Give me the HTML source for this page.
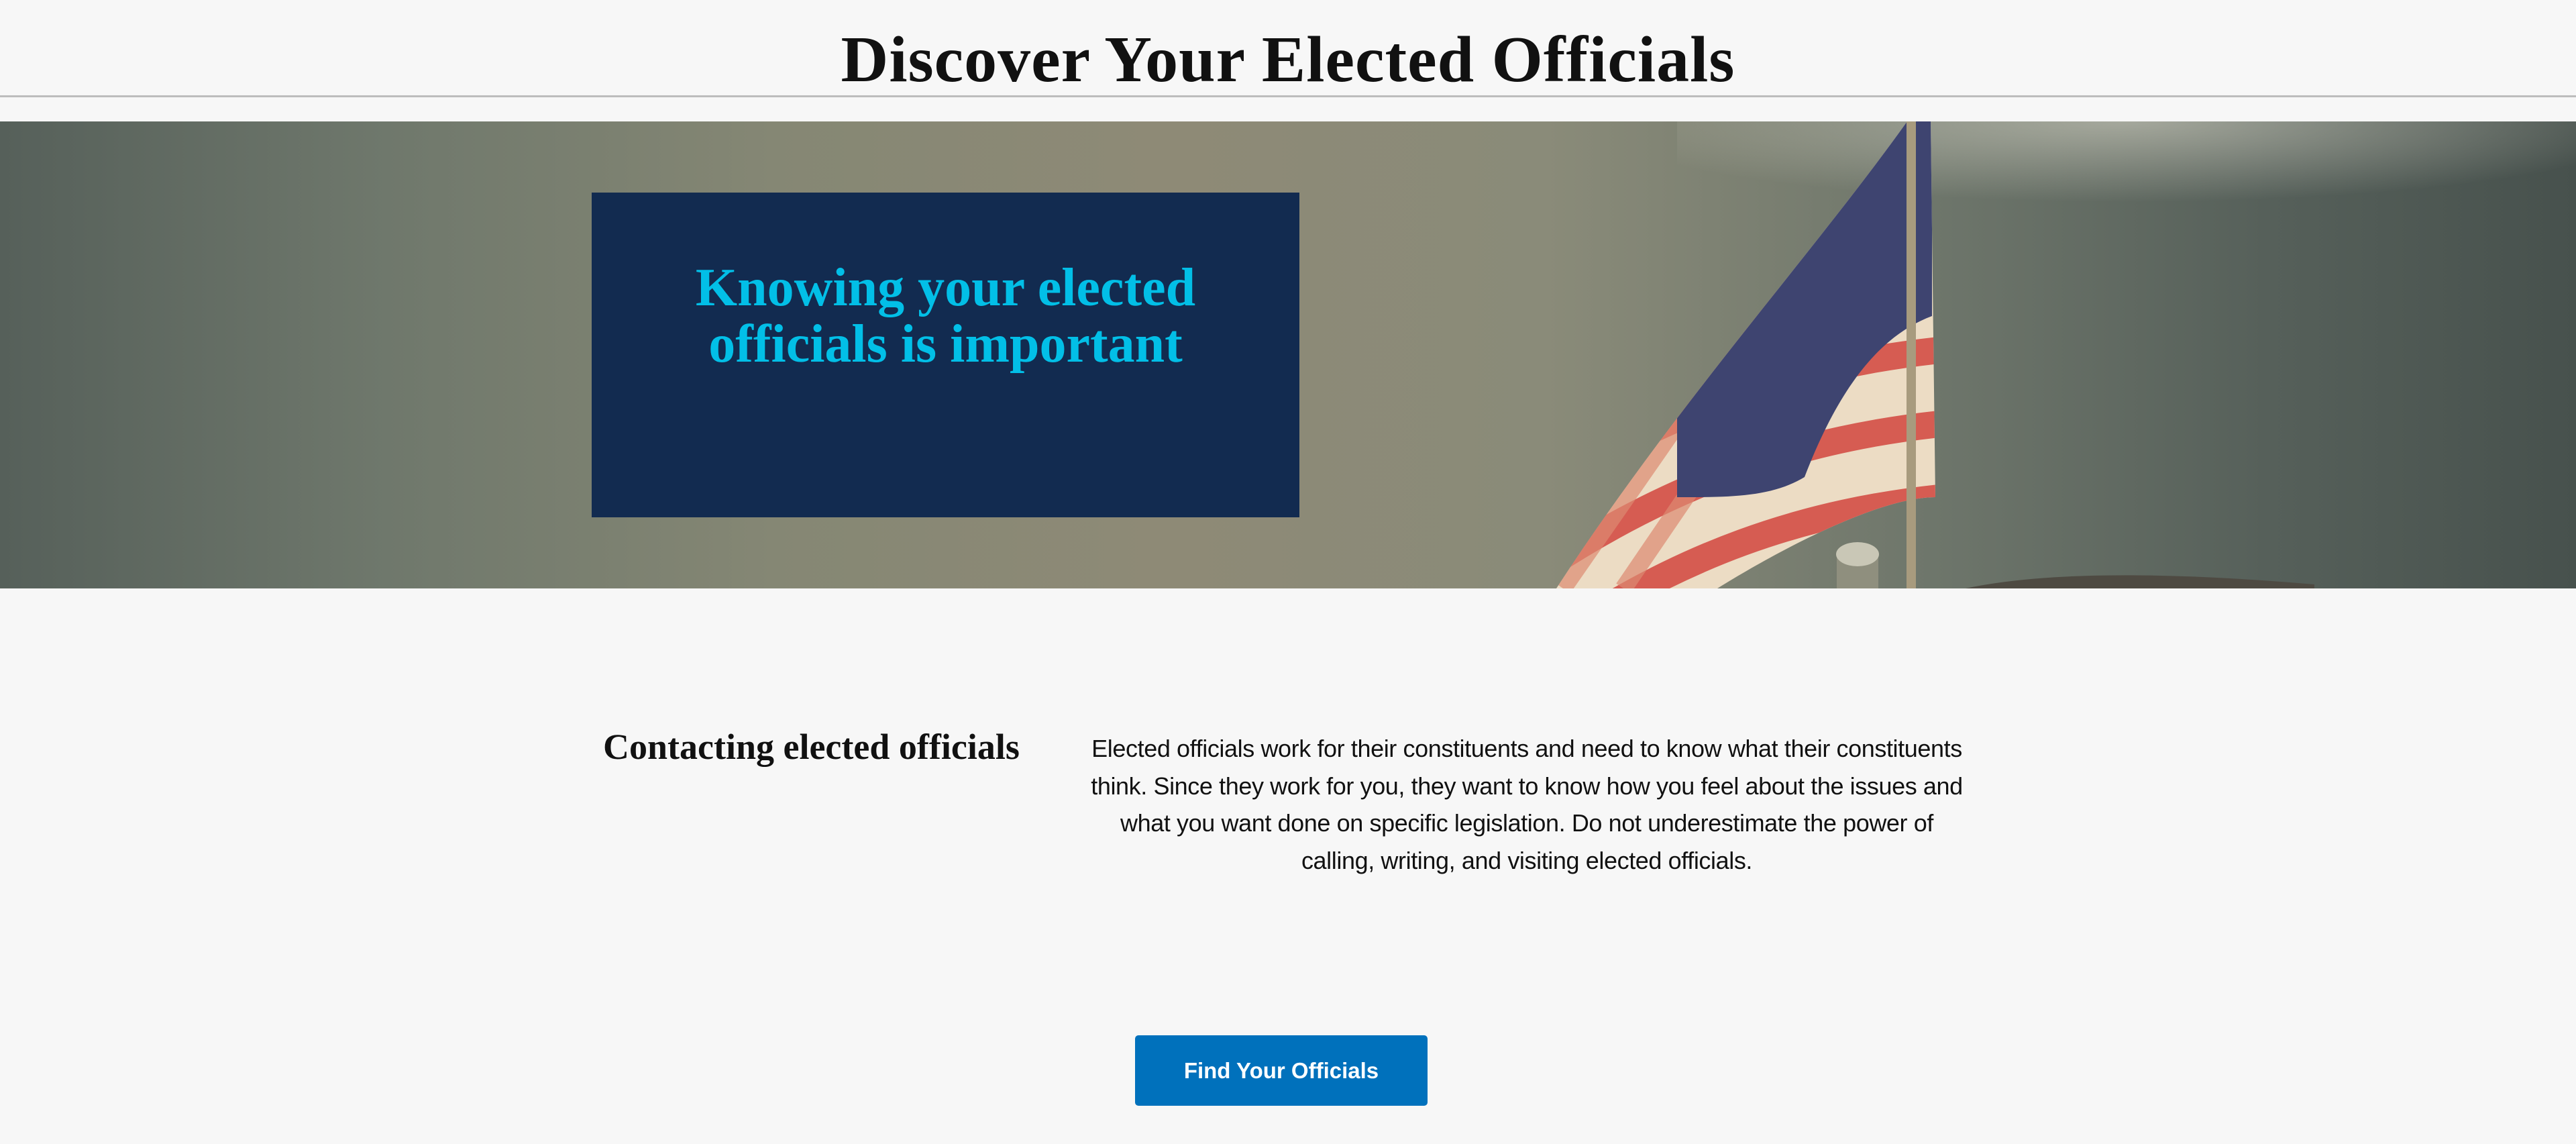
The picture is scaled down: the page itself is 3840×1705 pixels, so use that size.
<!DOCTYPE html>
<html><head><meta charset="utf-8"><style>
html,body{margin:0;padding:0;background:#f7f7f7;width:3840px;height:1705px;overflow:hidden;position:relative}
.t{position:absolute;left:0;width:3840px;top:24px;text-align:center;font-family:"Liberation Serif",serif;font-weight:bold;font-size:98px;line-height:130px;color:#111;letter-spacing:1px}
.line{position:absolute;left:0;top:142px;width:3840px;height:3px;background:#bdbdbd}
.hero{position:absolute;left:0;top:181px;width:3840px;height:696px;overflow:hidden;
background:linear-gradient(90deg,#56605a 0%,#6f786c 15%,#858774 30%,#8e8a76 45%,#8a8b79 60%,#6e766b 75%,#56605a 88%,#47514d 100%)}
.box{position:absolute;left:882px;top:287px;width:1055px;height:484px;background:#122b50}
.box h2{margin:0;position:absolute;top:100px;left:0;width:100%;text-align:center;font-family:"Liberation Serif",serif;font-weight:bold;font-size:80px;line-height:84px;color:#02bfe7}
.h3{position:absolute;left:899px;top:1078px;font-family:"Liberation Serif",serif;font-weight:bold;font-size:54px;line-height:70px;color:#111}
.p{position:absolute;left:1476px;top:1088px;width:1600px;text-align:center;font-family:"Liberation Sans",sans-serif;font-size:36px;line-height:55.5px;color:#111;letter-spacing:-0.4px}
.btn{position:absolute;left:1692px;top:1543px;width:436px;height:105px;background:#0071bc;border-radius:5px;color:#fff;font-family:"Liberation Sans",sans-serif;font-weight:bold;font-size:33px;line-height:105px;text-align:center}
</style></head><body>
<div class="t">Discover Your Elected Officials</div>
<div class="line"></div>
<div class="hero">
<svg width="3840" height="696" viewBox="0 0 3840 696" style="position:absolute;left:0;top:0">
<defs>
<radialGradient id="sky" cx="0.5" cy="0" r="0.6"><stop offset="0" stop-color="#dedccd" stop-opacity=".55"/><stop offset="1" stop-color="#dedccd" stop-opacity="0"/></radialGradient>
<clipPath id="fc"><path d="M2843,0 L2878,0 L2885,560 C2800,560 2650,640 2560,696 L2320,696 C2500,420 2700,200 2843,0Z"/></clipPath>
</defs>
<rect x="2500" y="0" width="1340" height="200" fill="url(#sky)"/>
<g clip-path="url(#fc)">
<rect x="2300" y="0" width="600" height="696" fill="#ecdcc4"/>
<g stroke="#d65c52" stroke-width="40" fill="none">
<path d="M2280,560 C2500,420 2700,360 2900,340"/>
<path d="M2280,680 C2500,530 2700,470 2900,450"/>
<path d="M2280,800 C2500,640 2700,580 2900,560"/>
</g>
<g stroke="#dd8a72" stroke-width="26" fill="none" opacity=".7">
<path d="M2330,696 L2640,250"/><path d="M2420,696 L2690,300"/>
</g>
<path d="M2843,0 L2880,0 L2880,290 C2800,320 2740,400 2690,530 C2640,560 2580,560 2500,560 L2500,0Z" fill="#3e4470"/>
</g>
<rect x="2842" y="0" width="14" height="696" fill="#a89b7e"/>
<rect x="2738" y="640" width="62" height="56" fill="#8f8f7e"/>
<ellipse cx="2769" cy="645" rx="32" ry="18" fill="#c9c7b6"/>
<path d="M2930,696 Q3100,660 3450,690 L3450,696Z" fill="#4e4a42"/>
</svg>
</div>
<div class="box"><h2>Knowing your elected<br>officials is important</h2></div>
<div class="h3">Contacting elected officials</div>
<div class="p">Elected officials work for their constituents and need to know what their constituents<br>think. Since they work for you, they want to know how you feel about the issues and<br>what you want done on specific legislation. Do not underestimate the power of<br>calling, writing, and visiting elected officials.</div>
<div class="btn">Find Your Officials</div>
</body></html>
